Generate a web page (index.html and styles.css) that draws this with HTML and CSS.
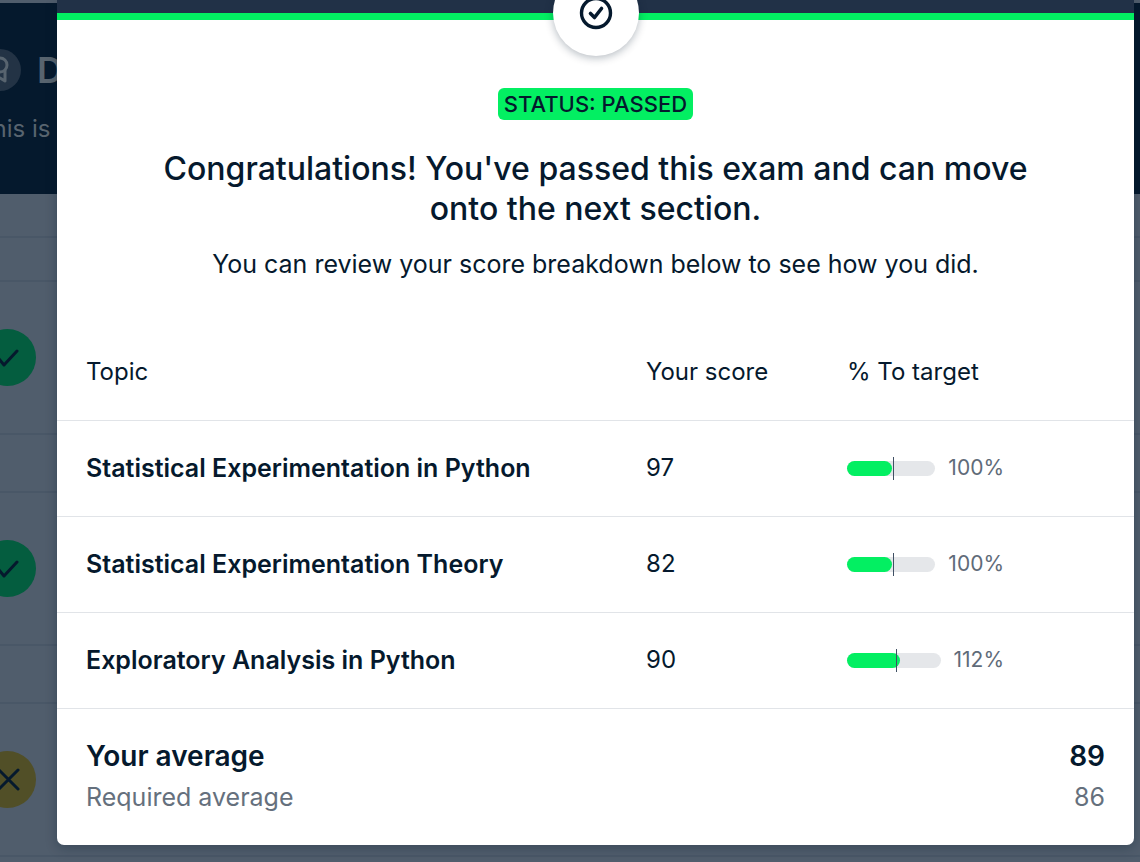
FILE: index.html
```
<!DOCTYPE html>
<html lang="en">
<head>
<meta charset="utf-8">
<title>Exam result</title>
<meta name="viewport" content="width=device-width, initial-scale=1">
<link rel="stylesheet" href="styles.css">
</head>
<body>
<div class="page" aria-hidden="true">
  <header class="page-header">
    <div class="page-title">
      <span class="medal">
        <svg width="24" height="28" viewBox="0 0 24 28" fill="none" stroke="currentColor" stroke-width="3" stroke-linejoin="round"><circle cx="12" cy="9" r="7"/><path d="M7 14v11l5-3 5 3V14"/></svg>
      </span>
      <span class="page-name">Data</span>
    </div>
    <p class="page-intro">This is</p>
  </header>
  <div class="strip strip-short"></div>
  <div class="strip strip-short"></div>
  <div class="strip strip-task"><span class="state state-done"><svg width="30" height="30" viewBox="0 0 30 30"><path d="M6 16l5 6L24 8"/></svg></span></div>
  <div class="strip strip-gap"></div>
  <div class="strip strip-task"><span class="state state-done"><svg width="30" height="30" viewBox="0 0 30 30"><path d="M6 16l5 6L24 8"/></svg></span></div>
  <div class="strip strip-gap"></div>
  <div class="strip strip-task"><span class="state state-failed"><svg width="30" height="30" viewBox="0 0 30 30"><path d="M6 5l19 19M25 5L6 24"/></svg></span></div>
</div>

<div class="overlay">
  <main class="modal" role="dialog" aria-labelledby="result-title">
    <div class="banner">
      <span class="seal">
        <svg width="34" height="34" viewBox="0 0 34 34" fill="none" stroke="currentColor" stroke-linecap="round" stroke-linejoin="round"><circle cx="17" cy="17" r="14.5" stroke-width="3.4"/><path d="M11.5 17.5l4 4 7-9" stroke-width="3.6"/></svg>
      </span>
    </div>
    <section class="summary">
      <span class="badge">STATUS: PASSED</span>
      <h1 class="title" id="result-title">Congratulations! You've passed this exam and can move onto the next section.</h1>
      <p class="lead">You can review your score breakdown below to see how you did.</p>
    </section>
    <table class="scores">
      <thead>
        <tr><th class="topic" scope="col">Topic</th><th class="score" scope="col">Your score</th><th scope="col">% To target</th></tr>
      </thead>
      <tbody>
        <tr>
          <th scope="row">Statistical Experimentation in Python</th><td>97</td>
          <td><div class="target"><span class="track"><span class="fill"></span><span class="mark"></span></span><span class="percent">100%</span></div></td>
        </tr>
        <tr>
          <th scope="row">Statistical Experimentation Theory</th><td>82</td>
          <td><div class="target"><span class="track"><span class="fill"></span><span class="mark"></span></span><span class="percent">100%</span></div></td>
        </tr>
        <tr>
          <th scope="row">Exploratory Analysis in Python</th><td>90</td>
          <td><div class="target"><span class="track"><span class="fill" style="width:57%"></span><span class="mark"></span></span><span class="percent">112%</span></div></td>
        </tr>
      </tbody>
    </table>
    <dl class="totals">
      <div class="total total-main"><dt>Your average</dt><dd>89</dd></div>
      <div class="total"><dt>Required average</dt><dd>86</dd></div>
    </dl>
  </main>
</div>
</body>
</html>
```
FILE: styles.css
```
* { box-sizing: border-box; }
body {
  margin: 0;
  min-height: 100vh;
  position: relative;
  overflow: hidden;
  background: #505d6c;
  color: #05192d;
  font-family: Inter, "Liberation Sans", sans-serif;
}
h1, p, dl, dd { margin: 0; }
svg { display: block; }

/* Dimmed course page */
.page {
  position: absolute;
  inset: 0;
  overflow: hidden;
  padding-top: 3px;
}
.page-header {
  height: 191px;
  padding-top: 46px;
  background: #05192d;
  color: #58646f;
}
.page-title {
  display: flex;
  align-items: center;
  gap: 16px;
  margin-left: -21px;
}
.medal {
  display: grid;
  place-items: center;
  width: 42px;
  height: 42px;
  border-radius: 50%;
  background: #233345;
}
.page-name { font-size: 36px; line-height: 42px; font-weight: 600; }
.page-intro { margin: 22px 0 0 -23px; font-size: 24px; line-height: 32px; white-space: nowrap; }
.strip { display: flex; align-items: center; border-bottom: 2px solid #495767; }
.strip-short { height: 44px; }
.strip-gap { height: 58px; }
.strip-task { height: 153px; }
.state {
  display: grid;
  place-items: center;
  width: 57px;
  height: 57px;
  margin-left: -21px;
  border-radius: 50%;
}
.state svg { fill: none; stroke: #05192d; stroke-width: 3; stroke-linecap: round; stroke-linejoin: round; }
.state-done { background: #045d3f; }
.state-failed { background: #514f27; }

/* Result dialog */
.overlay { position: relative; padding: 0 6px 17px 57px; }
.modal {
  border-radius: 0 0 7px 7px;
  background: #fff;
  box-shadow: 0 3px 12px rgba(5, 25, 45, .3);
}
.banner {
  position: relative;
  height: 20px;
  border-bottom: 7px solid #03ef62;
  background: #213147;
}
.seal {
  position: absolute;
  left: 50%;
  bottom: -43px;
  transform: translateX(-50%);
  display: grid;
  place-items: center;
  width: 86px;
  height: 86px;
  border-radius: 50%;
  background: #fff;
  box-shadow: 0 2px 8px rgba(5, 25, 45, .3);
}
.summary {
  display: flex;
  flex-direction: column;
  align-items: center;
  padding: 68px 80px 44px;
  text-align: center;
}
.badge {
  padding: 0 6px;
  border-radius: 6px;
  background: #03ef62;
  font-size: 22px;
  line-height: 32px;
  font-weight: 500;
}
.title { margin-top: 29px; font-size: 32px; line-height: 40px; font-weight: 500; }
.lead { margin-top: 19px; font-size: 25px; line-height: 32px; }

.scores { width: 100%; border-collapse: collapse; table-layout: fixed; }
.scores th, .scores td {
  height: 96px;
  padding: 0 0 0 29px;
  border-bottom: 1px solid #e1e4e8;
  font-size: 24px;
  line-height: 32px;
  text-align: left;
}
.scores thead th { font-weight: 400; }
.scores tbody th { font-size: 25px; font-weight: 600; }
.scores .topic { width: 52%; }
.scores .score { width: 201px; }
.target { display: flex; align-items: center; gap: 13px; width: 157px; }
.track { position: relative; flex: 1; height: 15px; border-radius: 8px; background: #e5e7ea; }
.fill { display: block; width: 51%; height: 100%; border-radius: 8px; background: #03ef62; }
.mark { position: absolute; left: 52%; top: -4px; bottom: -4px; width: 1px; background: #405064; }
.percent { color: #5f6b79; font-size: 21px; }

.totals { padding: 27px 29px; }
.total { display: flex; justify-content: space-between; color: #65707d; font-size: 25px; line-height: 42px; }
.total-main { color: #05192d; font-size: 28px; line-height: 40px; font-weight: 600; }
```
